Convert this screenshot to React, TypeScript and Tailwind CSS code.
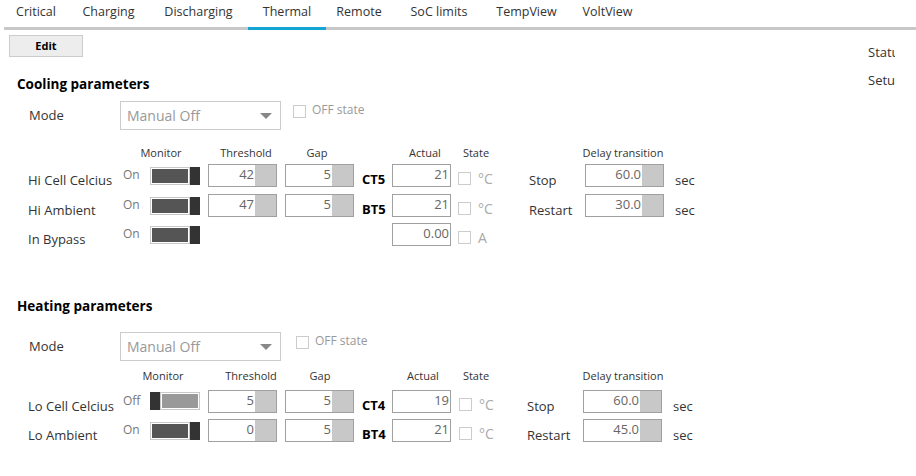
import React from "react";

const tabs: { label: string; w: string; active?: boolean }[] = [
  { label: "Critical", w: "w-[64px]" },
  { label: "Charging", w: "w-[81px]" },
  { label: "Discharging", w: "w-[99px]" },
  { label: "Thermal", w: "w-[78px]", active: true },
  { label: "Remote", w: "w-[66px]" },
  { label: "SoC limits", w: "w-[94px]" },
  { label: "TempView", w: "w-[81px]" },
  { label: "VoltView", w: "w-[81px]" },
];

function Toggle({ on }: { on: boolean }) {
  if (on) {
    return (
      <div className="flex h-[18px] w-[50px] mt-[3px]">
        <div className="h-full w-[40px] border border-[#c8c8c8] p-[1px] bg-white">
          <div className="h-full w-full bg-[#555555]" />
        </div>
        <div className="h-full w-[10px] bg-[#333333]" />
      </div>
    );
  }
  return (
    <div className="flex h-[18px] w-[50px] mt-[2px]">
      <div className="h-full w-[10px] bg-[#333333]" />
      <div className="h-full w-[40px] border border-[#c8c8c8] p-[1px] bg-white">
        <div className="h-full w-full bg-[#999999]" />
      </div>
    </div>
  );
}

function NumBox({ value, kind }: { value: string; kind: "th" | "act" | "delay" }) {
  const w = kind === "th" ? "w-[69px]" : kind === "act" ? "w-[59px]" : "w-[79px]";
  return (
    <div className={"flex h-[23px] border border-[#a0a0a0] bg-white shrink-0 " + w}>
      <div className="flex-1 text-right pr-[1px] text-[13px] leading-[18px] text-[#666666]">{value}</div>
      {kind !== "act" && <div className="h-full w-[21px] bg-[#c8c8c8]" />}
    </div>
  );
}

function Check({ className }: { className: string }) {
  return <div className={"h-[13px] w-[13px] border border-[#cccccc] bg-white shrink-0 " + className} />;
}

type RowProps = {
  label: string;
  on: boolean;
  th?: string;
  gap?: string;
  tag?: string;
  actual: string;
  unit: string;
  stateLabel?: string;
  delay?: string;
  heat?: boolean;
};

function Row({ label, on, th, gap, tag, actual, unit, stateLabel, delay, heat }: RowProps) {
  return (
    <div className="flex h-[23px] items-start">
      <div className="ml-[28px] w-[95px] mt-[8px] text-[13px] leading-[16px] text-[#333333] whitespace-nowrap">{label}</div>
      <div className="w-[27px] mt-[4px] text-[12px] leading-[14px] text-[#777777]">{on ? "On" : "Off"}</div>
      <Toggle on={on} />
      {th !== undefined ? (
        <>
          <div className="ml-[8px]">
            <NumBox value={th} kind="th" />
          </div>
          <div className="ml-[8px]">
            <NumBox value={gap ?? ""} kind="th" />
          </div>
          <div className="ml-[8px] w-[30px] mt-[7px] text-[13px] leading-[16px] font-bold text-black">{tag}</div>
        </>
      ) : (
        <div className="w-[192px]" />
      )}
      <NumBox value={actual} kind="act" />
      <Check className={heat ? "ml-[8px] mt-[8px]" : "ml-[7px] mt-[8px]"} />
      <div
        className={
          "ml-[7px] mt-[7px] text-[14px] leading-[16px] text-[#aaaaaa] " + (heat ? "w-[48px]" : "w-[51px]")
        }
      >
        {unit}
      </div>
      {stateLabel && (
        <>
          <div className="w-[56px] mt-[8px] text-[13px] leading-[16px] text-[#333333]">{stateLabel}</div>
          <NumBox value={delay ?? ""} kind="delay" />
          <div className="ml-[11px] mt-[8px] text-[13px] leading-[16px] text-[#333333]">sec</div>
        </>
      )}
    </div>
  );
}

function Headers({ heat }: { heat?: boolean }) {
  const cls = "text-center text-[11px] leading-[14px] text-[#333333] whitespace-nowrap shrink-0";
  return (
    <div className="flex h-[14px]">
      <div className={cls + (heat ? " ml-[133px] w-[60px]" : " ml-[131px] w-[60px]")}>Monitor</div>
      <div className={cls + (heat ? " ml-[31px] w-[54px]" : " ml-[25px] w-[60px]")}>Threshold</div>
      <div className={cls + (heat ? " ml-[17px] w-[50px]" : " ml-[16px] w-[50px]")}>Gap</div>
      <div className={cls + (heat ? " ml-[53px] w-[50px]" : " ml-[58px] w-[50px]")}>Actual</div>
      <div className={cls + (heat ? " ml-[3px] w-[50px]" : " ml-[1px] w-[50px]")}>State</div>
      <div className={cls + (heat ? " ml-[72px] w-[100px]" : " ml-[72px] w-[100px]")}>Delay transition</div>
    </div>
  );
}

function ModeRow({ heat }: { heat?: boolean }) {
  return (
    <div className="flex h-[29px] items-start">
      <div className="ml-[29px] w-[91px] h-full flex items-center text-[13px] text-[#333333]">Mode</div>
      <div className="h-[29px] w-[161px] border border-[#cccccc] bg-white flex items-center pl-[6px] pr-[8px]">
        <span className="flex-1 text-[14px] text-[#999999]">Manual Off</span>
        <svg width="12" height="6" viewBox="0 0 12 6">
          <path d="M0 0 L12 0 L6 6 Z" fill="#888888" />
        </svg>
      </div>
      <Check className={heat ? "ml-[15px] mt-[4px]" : "ml-[12px] mt-[4px]"} />
      <div className="ml-[6px] mt-[0px] text-[12px] leading-[18px] text-[#999999]">OFF state</div>
    </div>
  );
}

export default function App() {
  return (
    <div className="w-[916px] h-[476px] bg-white overflow-hidden font-['Open_Sans',sans-serif]">
      {/* Tab bar */}
      <div className="flex h-[30px]">
        <div className="w-[4px] shrink-0" />
        <div className="flex flex-1 border-b-[3px] border-[#c8c8c8]">
          {tabs.map((t) => (
            <div
              key={t.label}
              className={
                "shrink-0 h-[27px] flex items-start justify-center pt-[3px] text-[12.5px] leading-[18px] text-[#333333] whitespace-nowrap " +
                t.w +
                (t.active ? " relative" : "")
              }
            >
              {t.label}
              {t.active && <div className="absolute left-0 right-0 bottom-[-3px] h-[3px] bg-[#13a6d3]" />}
            </div>
          ))}
        </div>
      </div>

      <div className="flex">
        <div className="w-[868px] shrink-0">
          <div className="ml-[9px] mt-[5px] h-[22px] w-[74px] border border-[#cccccc] bg-[#ededed] flex items-center justify-center text-[11px] font-bold text-black">
            Edit
          </div>

          {/* Cooling */}
          <div className="mt-[17px] ml-[17px] h-[20px] text-[13.5px] leading-[20px] font-bold text-black">Cooling parameters</div>
          <div className="mt-[7px]">
            <ModeRow />
          </div>
          <div className="mt-[16px]">
            <Headers />
          </div>
          <div className="mt-[4px]">
            <Row label="Hi Cell Celcius" on th="42" gap="5" tag="CT5" actual="21" unit="°C" stateLabel="Stop" delay="60.0" />
          </div>
          <div className="mt-[7px]">
            <Row label="Hi Ambient" on th="47" gap="5" tag="BT5" actual="21" unit="°C" stateLabel="Restart" delay="30.0" />
          </div>
          <div className="mt-[6px]">
            <Row label="In Bypass" on actual="0.00" unit="A" />
          </div>

          {/* Heating */}
          <div className="mt-[50px] ml-[17px] h-[20px] text-[13.5px] leading-[20px] font-bold text-black">Heating parameters</div>
          <div className="mt-[16px]">
            <ModeRow heat />
          </div>
          <div className="mt-[8px]">
            <Headers heat />
          </div>
          <div className="mt-[7px]">
            <Row label="Lo Cell Celcius" on={false} th="5" gap="5" tag="CT4" actual="19" unit="°C" stateLabel="Stop" delay="60.0" heat />
          </div>
          <div className="mt-[6px]">
            <Row label="Lo Ambient" on th="0" gap="5" tag="BT4" actual="21" unit="°C" stateLabel="Restart" delay="45.0" heat />
          </div>
        </div>

        <div className="w-[27px] shrink-0 overflow-hidden whitespace-nowrap text-[13px] text-[#333333]">
          <div className="mt-[14px] leading-[16px]">Status</div>
          <div className="mt-[12px] leading-[16px]">Setup</div>
        </div>
      </div>
    </div>
  );
}
